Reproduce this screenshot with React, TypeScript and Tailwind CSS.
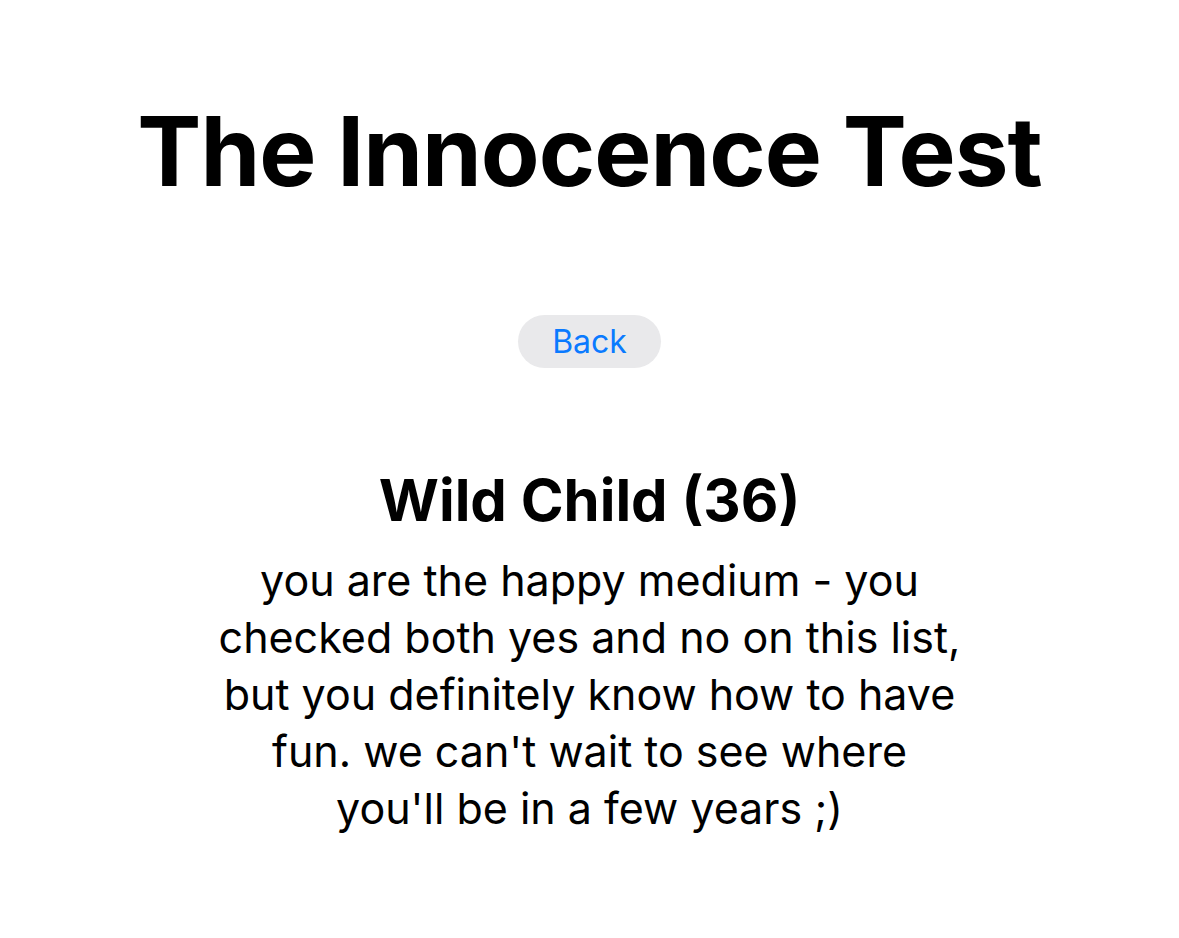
export default function App() {
  return (
    <div className="min-h-screen bg-white flex flex-col items-center font-['Inter',sans-serif] text-black">
      <h1 className="mt-[94px] text-[96px] leading-[1.2] font-bold tracking-[-0.01em]">
        The Innocence Test
      </h1>

      <button className="mt-[106px] h-[53px] w-[143px] rounded-full bg-[#e9e9eb] text-[32px] text-[#0a7aff]">
        Back
      </button>

      <h2 className="mt-[98px] text-[58px] leading-[1.2] font-bold">Wild Child (36)</h2>
      <p className="mt-[16px] text-center text-[43px] leading-[57px]">
        you are the happy medium - you
        <br />
        checked both yes and no on this list,
        <br />
        but you definitely know how to have
        <br />
        fun. we can't wait to see where
        <br />
        you'll be in a few years ;)
      </p>
    </div>
  );
}
